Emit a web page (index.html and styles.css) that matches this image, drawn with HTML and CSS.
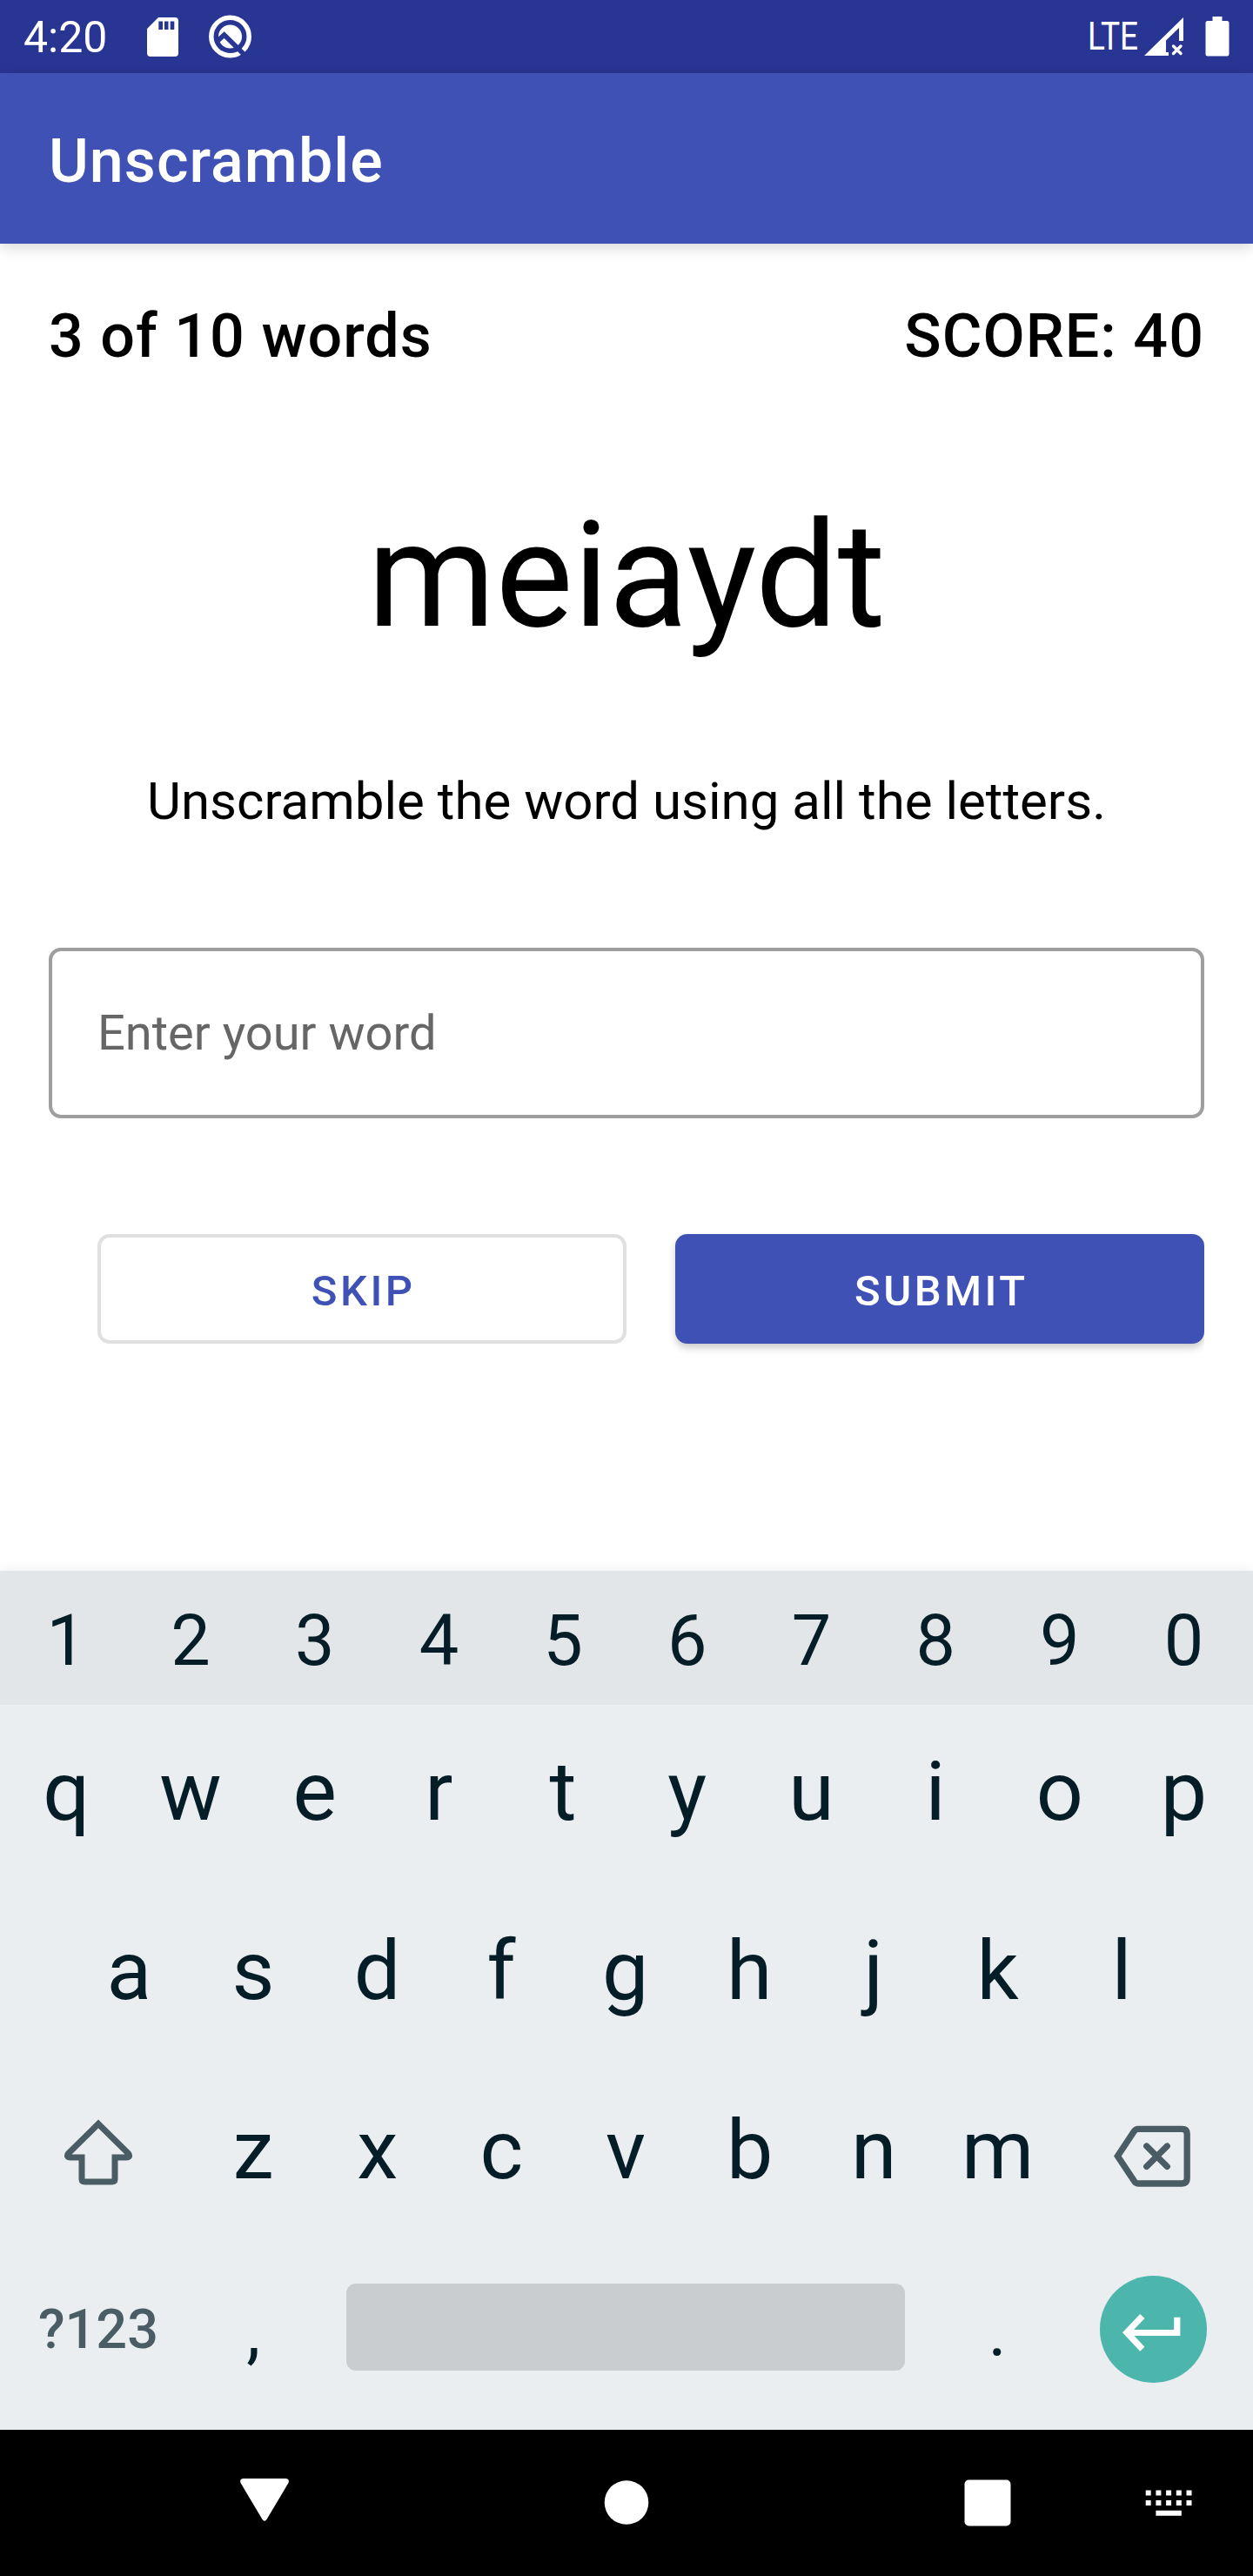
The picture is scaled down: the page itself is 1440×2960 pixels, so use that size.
FILE: index.html
```html
<!DOCTYPE html>
<html lang="en">
<head>
<meta charset="utf-8">
<title>Unscramble</title>
<link rel="stylesheet" href="styles.css">
</head>
<body>
<div class="screen">
  <div class="status">
    <span class="clock">4:20</span>
    <svg class="ic-sd" width="36" height="45" viewBox="0 0 36 45"><path fill="#fff" fill-rule="evenodd" d="M13 0H32Q36 0 36 4V41Q36 45 32 45H4Q0 45 0 41V13ZM13.300 4.500V14H18V4.500ZM20 4.500V14H24.500V4.500ZM26.700 4.500V14H31.300V4.500Z"/></svg>
    <svg class="ic-q" width="50" height="50" viewBox="0 0 50 50"><circle cx="24.500" cy="25" r="21.700" fill="none" stroke="#fff" stroke-width="5.500"/><circle cx="24.500" cy="25" r="13.500" fill="#fff"/><path d="M9 31L17.700 23L42 47" fill="none" stroke="#293593" stroke-width="5.600"/></svg>
    <span class="lte">LTE</span>
    <svg class="ic-sig" width="46" height="45" viewBox="0 0 46 45"><path fill="#fff" fill-rule="evenodd" d="M45 0V27H40V12L25 26.500V40H28V44H0Z"/><path d="M33.500 33L42 41.500M42 33L33.500 41.500" stroke="#fff" stroke-width="3.400" stroke-linecap="round"/></svg>
    <svg class="ic-bat" width="28" height="46" viewBox="0 0 28 46"><path fill="#fff" d="M8.500 0H19.500V5H25Q27.500 5 27.500 7.500V43Q27.500 45.500 25 45.500H3Q.5 45.500 .5 43V7.500Q.5 5 3 5H8.500Z"/></svg>
  </div>
  <header class="appbar"><h1>Unscramble</h1></header>
  <main class="game">
    <div class="stats"><span>3 of 10 words</span><span>SCORE: 40</span></div>
    <div class="word">meiaydt</div>
    <div class="hint">Unscramble the word using all the letters.</div>
    <div class="field">Enter your word</div>
    <div class="actions">
      <div class="btn skip">SKIP</div>
      <div class="clip"><div class="btn submit">SUBMIT</div></div>
    </div>
  </main>
  <div class="keyboard">
    <div class="row nums"><span>1</span><span>2</span><span>3</span><span>4</span><span>5</span><span>6</span><span>7</span><span>8</span><span>9</span><span>0</span></div>
    <div class="row r1"><span>q</span><span>w</span><span>e</span><span>r</span><span>t</span><span>y</span><span>u</span><span>i</span><span>o</span><span>p</span></div>
    <div class="row r2"><span>a</span><span>s</span><span>d</span><span>f</span><span>g</span><span>h</span><span>j</span><span>k</span><span>l</span></div>
    <div class="row r3">
      <span class="wide"><svg width="80" height="76" viewBox="0 0 80 76"><path d="M40 5.500L5.500 39.500Q2.500 44 8 44H21V69Q21 72 24.500 72H55.500Q59 72 59 69V44H72Q77.500 44 74.500 39.500Z" fill="none" stroke="#4a5c64" stroke-width="7"/></svg></span>
      <span>z</span><span>x</span><span>c</span><span>v</span><span>b</span><span>n</span><span>m</span>
      <span class="wide"><svg class="del" width="90" height="72" viewBox="0 0 90 72"><path d="M4.400 35.500L23 7.500Q25 4.300 28 4.300H78.500Q84.200 4.300 84.200 10V61.300Q84.200 67 78.500 67H28Q25 67 23 63.500Z" fill="none" stroke="#4a5c64" stroke-width="7.300"/><path d="M37.700 24L61.300 47.500M61.300 24L37.700 47.500" stroke="#4a5c64" stroke-width="7.300" stroke-linecap="round"/></svg></span>
    </div>
    <div class="row r4">
      <span class="sym">?123</span>
      <span class="punct">,</span>
      <div class="space"></div>
      <span class="punct">.</span>
      <div class="enter"><svg width="122" height="122" viewBox="0 0 122 122"><path d="M88.800 47.700V65.500H32M48.800 46.500L31 65.300L48.800 84.300" fill="none" stroke="#fff" stroke-width="7.200"/></svg></div>
    </div>
  </div>
  <nav class="navbar">
    <svg width="1440" height="168" viewBox="0 0 1440 168"><g fill="#fff"><path d="M279 56H329Q333 57 331.500 61L306.500 103Q304 106.500 301.500 103L276.500 61Q275 57 279 56Z"/><circle cx="720" cy="83.500" r="25.300"/><rect x="1108.500" y="57.500" width="53" height="53" rx="5"/><path d="M1316.700 69.400h6v6h-6zM1328.400 69.400h6v6h-6zM1340.100 69.400h6v6h-6zM1351.800 69.400h6v6h-6zM1363.500 69.400h6v6h-6zM1316.700 81h6v6h-6zM1328.400 81h6v6h-6zM1340.100 81h6v6h-6zM1351.800 81h6v6h-6zM1363.500 81h6v6h-6zM1328.400 92.700h29.400v6h-29.400z"/></g></svg>
  </nav>
</div>
</body>
</html>
```
FILE: styles.css
```css
* { box-sizing: border-box; }
body { margin: 0; font-family: Roboto, sans-serif; background: #fff; }
svg { display: block; flex: none; }
.screen { width: 1440px; height: 2960px; display: flex; flex-direction: column; overflow: hidden; color: #000; }
.status { height: 84px; background: #293593; color: #fff; display: flex; align-items: flex-start; padding: 0 27px; }
.clock { font-size: 50px; line-height: 86px; width: 142px; }
.ic-sd { margin-top: 20px; }
.ic-q { margin: 17px auto 0 35px; }
.lte { font-size: 44px; line-height: 84px; transform: scaleX(.84); transform-origin: right; }
.ic-sig { margin: 20px 24px 0 7px; }
.ic-bat { margin-top: 19px; }
.appbar { height: 196px; background: #3f51b5; color: #fff; padding: 0 56px; position: relative; box-shadow: 0 4px 16px rgba(0,0,0,.17); }
.appbar h1 { margin: 0; font-size: 70px; font-weight: 500; line-height: 202px; letter-spacing: 1.05px; }
.game { height: 1525px; padding: 56px 56px 0; display: flex; flex-direction: column; }
.stats { display: flex; justify-content: space-between; font-size: 70px; font-weight: 500; line-height: 82px; margin-top: 9px; letter-spacing: 1.05px; }
.word { text-align: center; font-size: 168px; line-height: 198px; margin-top: 136px; }
.hint { text-align: center; font-size: 60px; line-height: 70px; margin-top: 125px; }
.field { height: 196px; margin-top: 133px; border: 4px solid #9e9e9e; border-radius: 14px; padding-left: 52px; font-size: 56px; line-height: 188px; color: #666; }
.actions { margin-top: 133px; display: flex; gap: 36px; padding-left: 56px; }
.btn { width: 608px; height: 126px; border-radius: 14px; text-align: center; font-size: 49px; font-weight: 500; letter-spacing: 3.5px; padding-left: 3.5px; }
.skip { border: 4px solid #e0e0e0; color: #3f51b5; line-height: 123px; }
.clip { overflow: hidden; padding: 20px 0 30px 20px; margin-top: -20px; }
.submit { background: #3f51b5; color: #fff; line-height: 131px; box-shadow: 0 5px 9px rgba(0,0,0,.2); }
.keyboard { height: 987px; background: #eaeef1; color: #041d27; position: relative; box-shadow: 0 0 14px rgba(0,0,0,.08); display: flex; flex-direction: column; }
.row { display: flex; padding: 0 6px; height: 206px; font-size: 95px; line-height: 199px; }
.row > span { width: 142.6px; flex: none; text-align: center; display: block; }
.nums { height: 154px; background: #e2e6e9; font-size: 81px; line-height: 162px; }
.nums, .r1 { padding: 0 5px; }
.nums > span, .r1 > span { width: 142.7px; }
.r2 { padding: 0 77px; }
.row > .wide { width: 213.9px; display: flex; justify-content: center; padding-top: 64px; }
.del { margin-top: 7px; }
.r4 { height: 215px; }
.r4 > .sym { width: 213.9px; color: #4a5c64; font-size: 63px; font-weight: 500; line-height: 199px; }
.r4 > .punct { font-size: 81px; line-height: 206px; }
.space { width: 642px; height: 100px; flex: none; margin: 47px 35px 0 35.5px; background: #c9cdd0; border-radius: 11px; }
.enter { width: 122.4px; height: 122.4px; flex: none; border-radius: 50%; background: #4db6ac; margin: 38.3px 0 0 46.6px; }
.navbar { height: 168px; background: #000; }
```
